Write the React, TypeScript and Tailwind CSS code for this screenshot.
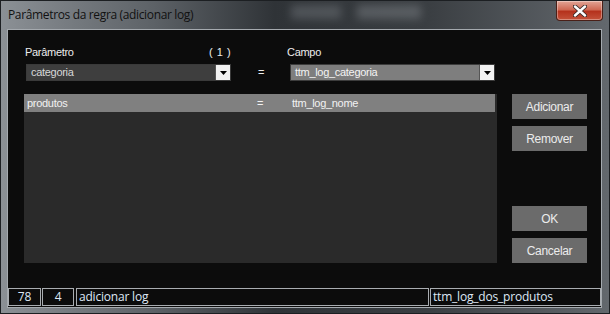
import { ReactNode } from 'react'

function Combo({ text, dark }: { text: string; dark?: boolean }) {
  return (
    <div
      className={
        dark
          ? 'flex h-[17px] w-[205px] items-center border border-[#3a3a3a] bg-[#3e3e3e] text-[#d8d8d8]'
          : 'flex h-[17px] w-[205px] items-center border border-[#3c3c3c] bg-[#7e7e7e] text-[#f4f4f4]'
      }
    >
      <span className='flex-1 truncate pl-[4px] leading-none'>{text}</span>
      <div className='flex h-[15px] w-[15px] items-center justify-center border-l border-[#555] bg-[#f2f2f2]'>
        <svg width='7' height='4' viewBox='0 0 7 4'>
          <polygon points='0,0 7,0 3.5,4' fill='#000' />
        </svg>
      </div>
    </div>
  )
}

function Btn({ children }: { children: ReactNode }) {
  return (
    <div className='flex h-[25px] w-[75px] items-center justify-center bg-[#6b6b6b] text-[12px] text-[#ececec]'>
      {children}
    </div>
  )
}

function StatusBox({ w, children, center }: { w: string; children: ReactNode; center?: boolean }) {
  return (
    <div
      className={`${w} flex h-[18px] items-center border border-[#a9adb1] text-[#dfe8f5] ${
        center ? 'justify-center' : 'pl-[2px]'
      }`}
    >
      {children}
    </div>
  )
}

export default function App() {
  return (
    <div
      className='relative flex h-[314px] w-[610px] flex-col overflow-hidden border border-[#1c1f22] bg-[linear-gradient(90deg,#8b9095_0%,#5d6267_25%,#2f3337_45%,#3a3e42_70%,#63686d_100%)]'
      style={{ fontFamily: '"Liberation Sans", Arial, sans-serif' }}
    >
      {/* blurred stuff behind the glass */}
      <div className='absolute left-[290px] top-[4px] h-[14px] w-[50px] bg-[#7d8287] opacity-40 blur-[4px]' />
      <div className='absolute left-[356px] top-[4px] h-[14px] w-[64px] bg-[#8a8f94] opacity-40 blur-[4px]' />

      {/* title bar */}
      <div className='flex h-[28px] shrink-0 items-start'>
        <span
          className='pl-[7px] pt-[8px] text-[12px] leading-none text-[#111]'
          style={{ fontFamily: '"Open Sans", "Noto Sans", sans-serif', letterSpacing: '-0.35px' }}
        >
          Parâmetros da regra (adicionar log)
        </span>
        <div className='ml-auto mr-[6px] flex h-[20px] w-[47px] items-center justify-center rounded-b-[4px] border border-t-0 border-[#4a2018] bg-[linear-gradient(180deg,#e3a596_0%,#cf6a55_45%,#b5321d_55%,#c4523a_100%)] shadow-[inset_0_0_0_1px_rgba(255,255,255,0.35)]'>
          <svg width='14' height='12' viewBox='0 0 14 12'>
            <path d='M2 1.5 L12 10.5 M12 1.5 L2 10.5' stroke='#3a2a28' strokeWidth='4.2' strokeLinecap='round' />
            <path d='M2 1.5 L12 10.5 M12 1.5 L2 10.5' stroke='#ffffff' strokeWidth='2.4' strokeLinecap='round' />
          </svg>
        </div>
      </div>

      {/* client */}
      <div className='mb-[5px] ml-[6px] mr-[7px] flex flex-1 flex-col border border-[#a5aaaf] bg-[#0c0c0c] text-[11px] tracking-[-0.3px]'>
        {/* header */}
        <div className='flex flex-col pl-[16px] pt-[15px]'>
          <div className='flex h-[14px] items-center text-[#ececec]'>
            <span className='w-[185px] pl-[1px]'>Parâmetro</span>
            <span className='w-[78px] tracking-[0.5px]'>( 1 )</span>
            <span>Campo</span>
          </div>
          <div className='mt-[5px] flex items-center'>
            <div className='pl-[2px]'>
              <Combo text='categoria' dark />
            </div>
            <span className='w-[59px] pl-[27px] text-[#ececec]'>=</span>
            <Combo text='ttm_log_categoria' />
          </div>
        </div>

        {/* list + buttons */}
        <div className='mt-[13px] flex pl-[16px]'>
          <div className='h-[169px] w-[473px] bg-[#2a2a2a]'>
            <div className='flex h-[18px] w-[471px] items-center bg-[#808080] text-[#f2f2f2]'>
              <span className='w-[233px] pl-[3px]'>produtos</span>
              <span className='w-[35px]'>=</span>
              <span>ttm_log_nome</span>
            </div>
          </div>
          <div className='ml-[15px] flex flex-col'>
            <Btn>Adicionar</Btn>
            <div className='mt-[7px]'>
              <Btn>Remover</Btn>
            </div>
            <div className='mt-[55px]'>
              <Btn>OK</Btn>
            </div>
            <div className='mt-[7px]'>
              <Btn>Cancelar</Btn>
            </div>
          </div>
        </div>

        {/* status bar */}
        <div
          className='mt-auto mb-[1px] flex gap-[1px] text-[12px] tracking-[-0.2px]'
          style={{ fontFamily: '"Open Sans", "Noto Sans", sans-serif' }}
        >
          <StatusBox w='w-[33px]' center>78</StatusBox>
          <StatusBox w='w-[32px]' center>4</StatusBox>
          <StatusBox w='w-[353px] ml-[1px]'>adicionar log</StatusBox>
          <StatusBox w='flex-1'>ttm_log_dos_produtos</StatusBox>
        </div>
      </div>
    </div>
  )
}
